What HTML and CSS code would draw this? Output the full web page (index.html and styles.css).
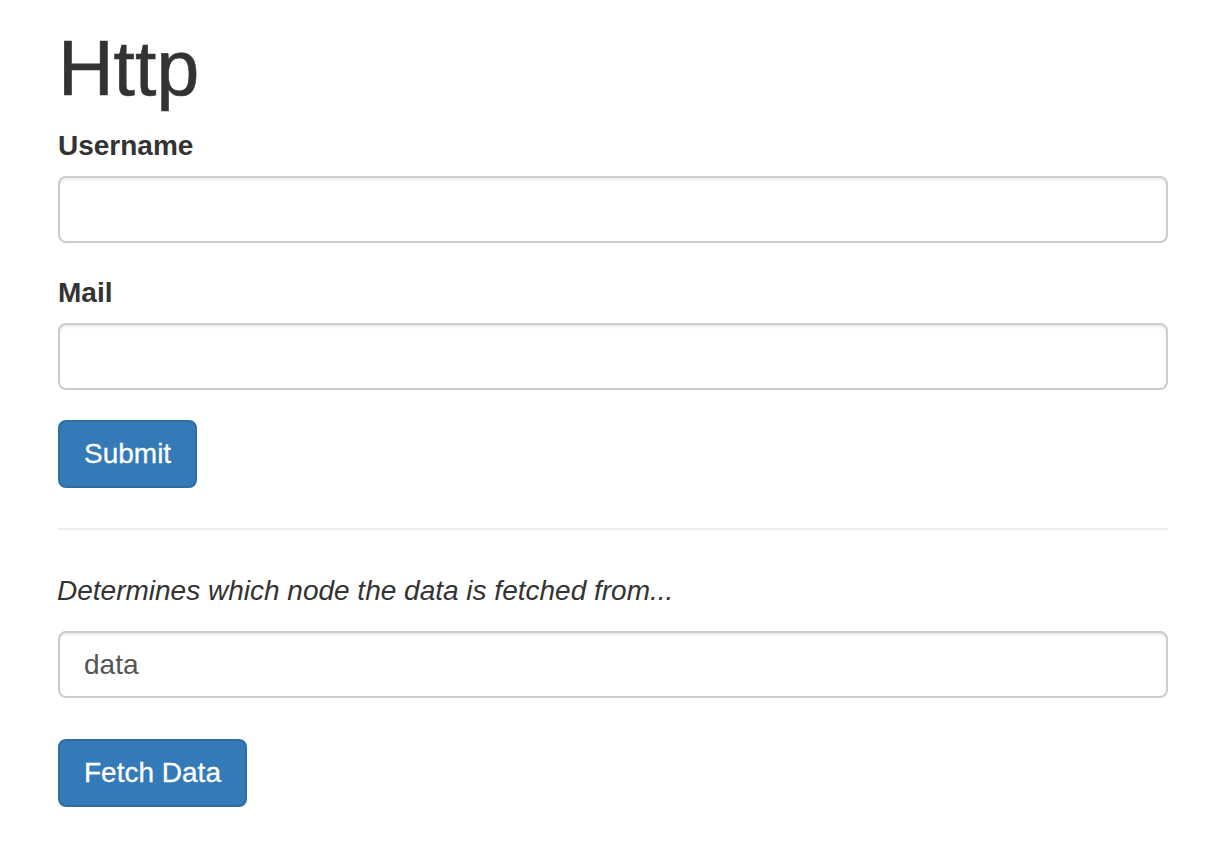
FILE: index.html
```html
<!DOCTYPE html>
<html>
<head>
<meta charset="utf-8">
<link rel="stylesheet" href="styles.css">
</head>
<body>
<div class="container">
  <h1 class="title">Http</h1>
  <form class="form">
    <div class="form-group">
      <label class="label">Username</label>
      <input class="input" type="text">
    </div>
    <div class="form-group">
      <label class="label">Mail</label>
      <input class="input" type="text">
    </div>
    <button class="btn" type="button">Submit</button>
  </form>
  <hr class="divider">
  <p class="hint">Determines which node the data is fetched from...</p>
  <div class="form-group fetch-group">
    <input class="input" type="text" value="data">
  </div>
  <button class="btn" type="button">Fetch Data</button>
</div>
</body>
</html>
```

FILE: styles.css
```css
html, body {
  margin: 0;
  padding: 0;
  background: #fff;
}
body {
  font-family: "Liberation Sans", Arial, sans-serif;
  font-size: 28px;
  line-height: 40px;
  color: #333;
}
.container {
  padding: 26px 58px 0 58px;
}
.title {
  font-size: 77px;
  font-weight: 500;
  line-height: 84px;
  margin: 0 0 16px 0;
  color: #333;
  -webkit-text-stroke: 0.6px #333;
}
.form { margin: 0; }
.form-group {
  margin-bottom: 30px;
}
.label {
  display: block;
  font-weight: bold;
  margin-bottom: 10px;
  line-height: 40px;
}
.input {
  display: block;
  box-sizing: border-box;
  width: 100%;
  height: 67px;
  padding: 12px 24px;
  font-family: "Liberation Sans", Arial, sans-serif;
  font-size: 28px;
  line-height: 40px;
  color: #555;
  background: #fff;
  border: 2px solid #ccc;
  border-radius: 8px;
  box-shadow: inset 0 2px 2px rgba(0,0,0,.075);
  outline: none;
}
.btn {
  display: inline-block;
  box-sizing: border-box;
  height: 68px;
  padding: 12px 24px;
  font-family: "Liberation Sans", Arial, sans-serif;
  font-size: 28px;
  line-height: 40px;
  color: #fff;
  background: #337ab7;
  border: 2px solid #2e6da4;
  border-radius: 8px;
  cursor: pointer;
  -webkit-text-stroke: 0.3px #fff;
}
.divider {
  margin: 40px 0 41px 0;
  border: 0;
  border-top: 2px solid #eee;
  height: 0;
}
.hint {
  font-style: italic;
  margin: 0 0 20px -1px;
}
.fetch-group {
  margin-bottom: 41px;
}
```
